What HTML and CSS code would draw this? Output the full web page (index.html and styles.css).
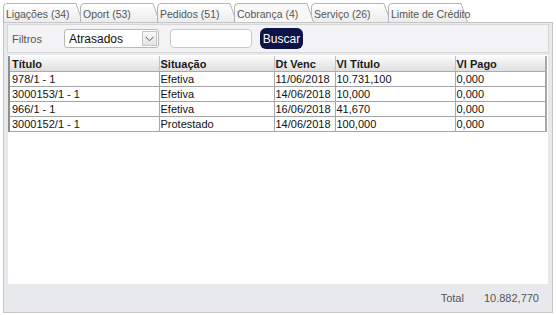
FILE: index.html
```html
<!DOCTYPE html>
<html>
<head>
<meta charset="utf-8">
<link rel="stylesheet" href="styles.css">
</head>
<body>
<div class="tabs">
  <div class="tab"><svg class="tab-bg" viewBox="0 0 80 19" preserveAspectRatio="none"><defs><linearGradient id="g" x1="0" y1="0" x2="0" y2="1"><stop offset="0" stop-color="#ffffff"/><stop offset="1" stop-color="#ececec"/></linearGradient></defs><path d="M0.5 19 V4 Q0.5 0.5 4 0.5 H73 L79.5 19" fill="url(#g)" stroke="#b4b4b4"/></svg><span>Ligações (34)</span></div>
  <div class="tab"><svg class="tab-bg" viewBox="0 0 80 19" preserveAspectRatio="none"><path d="M0.5 19 V4 Q0.5 0.5 4 0.5 H73 L79.5 19" fill="url(#g)" stroke="#b4b4b4"/></svg><span>Oport (53)</span></div>
  <div class="tab"><svg class="tab-bg" viewBox="0 0 80 19" preserveAspectRatio="none"><path d="M0.5 19 V4 Q0.5 0.5 4 0.5 H73 L79.5 19" fill="url(#g)" stroke="#b4b4b4"/></svg><span>Pedidos (51)</span></div>
  <div class="tab active"><svg class="tab-bg" viewBox="0 0 80 19" preserveAspectRatio="none"><path d="M0.5 19 V4 Q0.5 0.5 4 0.5 H73 L79.5 19" fill="#f7f7f8" stroke="#b4b4b4"/></svg><span>Cobrança (4)</span></div>
  <div class="tab"><svg class="tab-bg" viewBox="0 0 80 19" preserveAspectRatio="none"><path d="M0.5 19 V4 Q0.5 0.5 4 0.5 H73 L79.5 19" fill="url(#g)" stroke="#b4b4b4"/></svg><span>Serviço (26)</span></div>
  <div class="tab"><svg class="tab-bg" viewBox="0 0 80 19" preserveAspectRatio="none"><path d="M0.5 19 V4 Q0.5 0.5 4 0.5 H73 L79.5 19" fill="url(#g)" stroke="#b4b4b4"/></svg><span>Limite de Crédito</span></div>
</div>
<div class="frame">
  <div class="filters">
    <span class="label">Filtros</span>
    <div class="select"><span class="sel-text">Atrasados</span><span class="sel-btn"><svg width="9" height="6" viewBox="0 0 9 6"><path d="M0.5 0.8 L4.5 4.8 L8.5 0.8" fill="none" stroke="#555" stroke-width="1"/></svg></span></div>
    <div class="input"></div>
    <div class="btn">Buscar</div>
  </div>
  <div class="grid">
    <table>
      <colgroup><col class="c1"><col class="c2"><col class="c3"><col class="c4"><col class="c5"></colgroup>
      <thead>
        <tr><th>Título</th><th>Situação</th><th>Dt Venc</th><th>Vl Título</th><th>Vl Pago</th></tr>
      </thead>
      <tbody>
        <tr><td>978/1 - 1</td><td>Efetiva</td><td>11/06/2018</td><td>10.731,100</td><td>0,000</td></tr>
        <tr><td>3000153/1 - 1</td><td>Efetiva</td><td>14/06/2018</td><td>10,000</td><td>0,000</td></tr>
        <tr><td>966/1 - 1</td><td>Efetiva</td><td>16/06/2018</td><td>41,670</td><td>0,000</td></tr>
        <tr><td>3000152/1 - 1</td><td>Protestado</td><td>14/06/2018</td><td>100,000</td><td>0,000</td></tr>
      </tbody>
    </table>
  </div>
  <div class="footer"><span class="total-label">Total</span><span class="total-value">10.882,770</span></div>
</div>
</body>
</html>
```
FILE: styles.css
```css
html, body {
  margin: 0;
  padding: 0;
  background: #ffffff;
  font-family: "Liberation Sans", Arial, sans-serif;
}
.tabs {
  display: flex;
  padding: 3px 0 0 3px;
  height: 19px;
}
.tab {
  position: relative;
  width: 80px;
  height: 19px;
  margin-right: -3px;
  font-size: 10.5px;
  color: #555;
}
.tab-bg {
  position: absolute;
  left: 0;
  top: 0;
  width: 80px;
  height: 19px;
}
.tab span {
  position: relative;
  display: block;
  padding: 5px 0 0 3px;
  white-space: nowrap;
}
.tab.active {
  z-index: 1;
}
.frame {
  margin: 0 3px;
  height: 289px;
  border: 1px solid #c6c6c6;
  background: #e8e9ec;
  display: flex;
  flex-direction: column;
}
.filters {
  margin: 1px 3px 0 3px;
  height: 27px;
  border: 1px solid #d6d6d8;
  background: #f3f3f5;
  display: flex;
  align-items: center;
  font-size: 11px;
}
.label {
  color: #555;
  margin-left: 4px;
  width: 52px;
}
.select {
  width: 93px;
  height: 17px;
  border: 1px solid #b9b9b9;
  border-radius: 3px;
  background: #fff;
  display: flex;
  align-items: center;
  justify-content: space-between;
}
.sel-text {
  font-size: 12px;
  color: #111;
  padding-left: 4px;
}
.sel-btn {
  width: 15px;
  height: 15px;
  margin-right: 1px;
  border: 1px solid #c4c4c4;
  background: linear-gradient(#f7f7f7, #e4e4e4);
  display: flex;
  align-items: center;
  justify-content: center;
  box-sizing: border-box;
}
.input {
  width: 80px;
  height: 17px;
  margin-left: 11px;
  border: 1px solid #c9c9c9;
  border-radius: 4px;
  background: #fff;
}
.btn {
  margin-left: 8px;
  width: 43px;
  height: 21px;
  border-radius: 6px;
  background: #0b1548;
  color: #fff;
  font-size: 12px;
  display: flex;
  align-items: center;
  justify-content: center;
}
.grid {
  margin: 2px 4px 0 4px;
  height: 228px;
  background: #fff;
  padding-top: 1px;
}
table {
  width: 539px;
  border-collapse: collapse;
  border-left: 2px solid #8e8e8e;
  border-right: 2px solid #a8a8a8;
  font-size: 11px;
  color: #111;
  table-layout: fixed;
}
col.c1 { width: 150px; }
col.c2 { width: 115px; }
col.c3 { width: 61px; }
col.c4 { width: 120px; }
th {
  height: 15px;
  padding: 0 0 0 1px;
  text-align: left;
  font-weight: bold;
  font-size: 11px;
  color: #1a1a1a;
  background: linear-gradient(#fbfbfb, #dedede);
  border-left: 1px solid #c0c0c0;
  border-bottom: 1px solid #aaa;
}
td {
  height: 14px;
  padding: 0 0 0 1px;
  border-left: 1px solid #a8a8a8;
  border-bottom: 1px solid #a4a4a4;
  white-space: nowrap;
  line-height: 14px;
}
td:first-child, th:first-child { border-left: none; padding-left: 2px; }
.footer {
  flex: 1;
  display: flex;
  align-items: center;
  justify-content: flex-end;
  font-size: 11px;
  color: #555;
  padding-right: 13px;
}
.total-label { margin-right: 20px; }
```
